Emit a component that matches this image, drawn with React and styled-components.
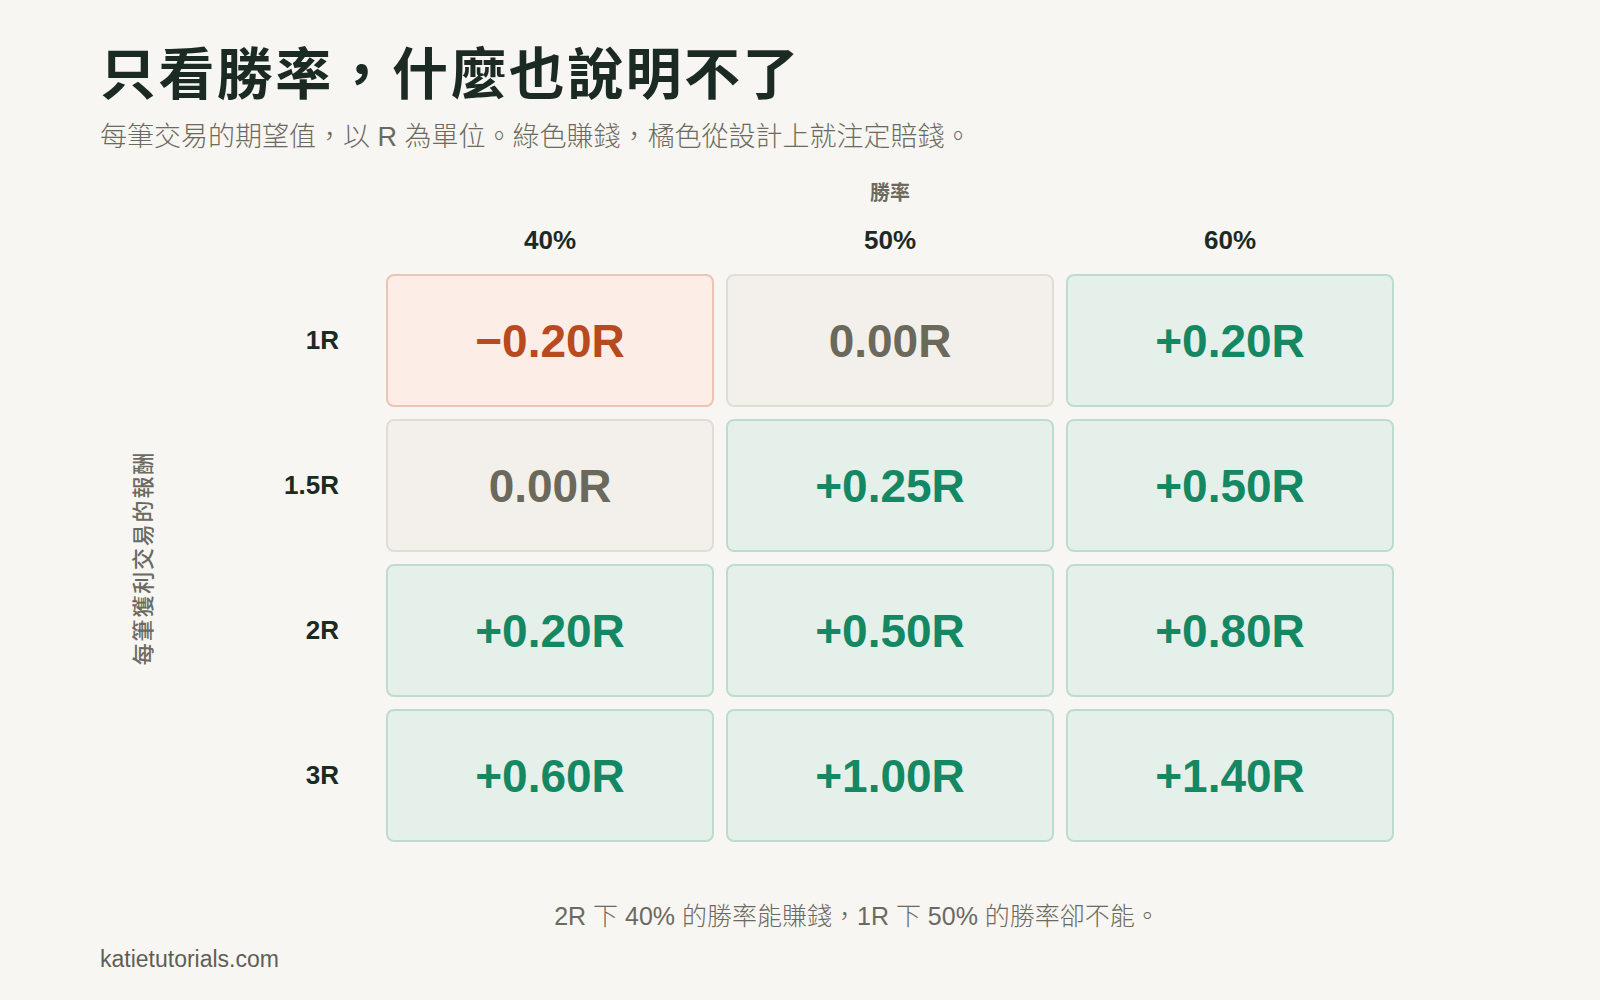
import React from "react";
import styled, { createGlobalStyle } from "styled-components";

const Global = createGlobalStyle`
  html, body { margin: 0; padding: 0; background: #f8f6f2; }
  body { font-family: "Liberation Sans", "Noto Sans CJK TC", sans-serif; }
`;

const Page = styled.div`
  width: 1600px;
  height: 1000px;
  box-sizing: border-box;
  padding: 31px 100px 0 100px;
  display: flex;
  flex-direction: column;
`;

const Title = styled.h1`
  margin: 0;
  font-family: "Noto Sans CJK TC", sans-serif;
  font-size: 56px;
  line-height: 78px;
  font-weight: 700;
  letter-spacing: 2.4px;
  color: #1b2a22;
`;

const Subtitle = styled.p`
  margin: 10px 0 0 0;
  font-family: "Liberation Sans", "Noto Sans CJK TC", sans-serif;
  font-size: 27px;
  line-height: 36px;
  font-weight: 300;
  color: #6b6a60;
`;

const Chart = styled.div`
  margin-top: 15px;
  display: grid;
  grid-template-columns: 82px 180px repeat(3, 328px);
  grid-template-rows: 36px 44px repeat(4, 133px);
  column-gap: 12px;
  row-gap: 12px;
  align-items: center;
`;

const AxisTitle = styled.div`
  grid-column: 3 / span 3;
  grid-row: 1;
  text-align: center;
  font-family: "Liberation Sans", "Noto Sans CJK TC", sans-serif;
  font-size: 20px;
  font-weight: 700;
  color: #6b6a60;
  align-self: end;
`;

const ColHead = styled.div`
  grid-row: 2;
  text-align: center;
  font-size: 26px;
  line-height: 30px;
  font-weight: 700;
  color: #1b2a22;
`;

const YAxis = styled.div`
  grid-column: 1;
  grid-row: 3 / span 4;
  justify-self: center;
  writing-mode: vertical-rl;
  text-orientation: sideways;
  transform: rotate(180deg);
  font-family: "Noto Sans CJK TC", sans-serif;
  font-size: 22px;
  letter-spacing: 1.8px;
  font-weight: 500;
  color: #6b6a60;
`;

const RowHead = styled.div`
  grid-column: 2;
  text-align: right;
  padding-right: 35px;
  font-size: 26px;
  font-weight: 700;
  color: #1b2a22;
`;

const tones = {
  neg: { bg: "#fcede6", border: "#ecc4b4", fg: "#b84a1f" },
  zero: { bg: "#f3f0eb", border: "#e2ddd4", fg: "#6b685c" },
  pos: { bg: "#e6f0eb", border: "#bcdccf", fg: "#148763" },
};

const Cell = styled.div`
  height: 133px;
  box-sizing: border-box;
  border-radius: 8px;
  border: 2px solid ${(p) => tones[p.$tone].border};
  background: ${(p) => tones[p.$tone].bg};
  color: ${(p) => tones[p.$tone].fg};
  display: flex;
  align-items: center;
  justify-content: center;
  font-size: 46px;
  font-weight: 700;
`;

const Note = styled.p`
  margin: 54px 0 0 0;
  padding-left: 114px;
  text-align: center;
  font-family: "Liberation Sans", "Noto Sans CJK TC", sans-serif;
  font-size: 25px;
  font-weight: 300;
  color: #6b6a60;
`;

const Footer = styled.div`
  margin-top: 14px;
  font-family: "Liberation Sans", sans-serif;
  font-size: 23px;
  color: #5f5e56;
`;

const cols = ["40%", "50%", "60%"];
const rows = [
  { label: "1R", vals: [["−0.20R", "neg"], ["0.00R", "zero"], ["+0.20R", "pos"]] },
  { label: "1.5R", vals: [["0.00R", "zero"], ["+0.25R", "pos"], ["+0.50R", "pos"]] },
  { label: "2R", vals: [["+0.20R", "pos"], ["+0.50R", "pos"], ["+0.80R", "pos"]] },
  { label: "3R", vals: [["+0.60R", "pos"], ["+1.00R", "pos"], ["+1.40R", "pos"]] },
];

export default function App() {
  return (
    <Page>
      <Global />
      <Title>只看勝率，什麼也說明不了</Title>
      <Subtitle>每筆交易的期望值，以 R 為單位。綠色賺錢，橘色從設計上就注定賠錢。</Subtitle>
      <Chart>
        <AxisTitle>勝率</AxisTitle>
        {cols.map((c, i) => (
          <ColHead key={c} style={{ gridColumn: i + 3 }}>{c}</ColHead>
        ))}
        <YAxis>每筆獲利交易的報酬</YAxis>
        {rows.map((r, ri) => (
          <React.Fragment key={r.label}>
            <RowHead style={{ gridRow: ri + 3 }}>{r.label}</RowHead>
            {r.vals.map(([v, t], ci) => (
              <Cell key={ci} $tone={t} style={{ gridRow: ri + 3, gridColumn: ci + 3 }}>{v}</Cell>
            ))}
          </React.Fragment>
        ))}
      </Chart>
      <Note>2R 下 40% 的勝率能賺錢，1R 下 50% 的勝率卻不能。</Note>
      <Footer>katietutorials.com</Footer>
    </Page>
  );
}
